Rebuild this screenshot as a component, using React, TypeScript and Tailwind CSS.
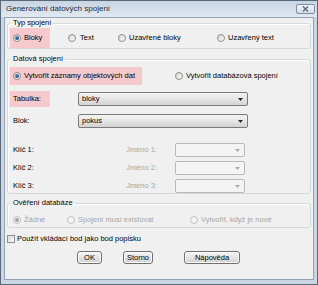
import type { ReactNode } from "react";

function Radio({ checked = false, disabled = false }: { checked?: boolean; disabled?: boolean }) {
  return (
    <span
      className={`flex h-[8px] w-[8px] shrink-0 items-center justify-center rounded-full border ${
        disabled ? "border-[#c2c2c2] bg-[#f3f3f3]" : "border-[#8e8f8f] bg-linear-to-br from-[#d4d4d4] to-[#fdfdfd]"
      }`}
    >
      {checked && (
        <span
          className={`h-[4px] w-[4px] rounded-full ${
            disabled ? "bg-[#a3a3a3]" : "bg-linear-to-br from-[#6a9ad2] to-[#123a6e]"
          }`}
        />
      )}
    </span>
  );
}

function Combo({ value, className, disabled = false }: { value?: string; className: string; disabled?: boolean }) {
  return (
    <div
      className={`flex h-[14px] items-center justify-between rounded-[2px] border pl-[3px] pr-[4px] ${className} ${
        disabled
          ? "border-[#b6babd] bg-[#f4f4f4]"
          : "border-[#7a7a7a] bg-linear-to-b from-[#f3f3f3] via-[#e6e6e6] to-[#d2d2d2]"
      }`}
    >
      <span>{value}</span>
      <svg width="5" height="3" viewBox="0 0 5 3">
        <path d="M0 0h5L2.5 3z" fill={disabled ? "#a8a8a8" : "#2a2a2a"} />
      </svg>
    </div>
  );
}

function Group({ title, children, className = "" }: { title: string; children: ReactNode; className?: string }) {
  return (
    <fieldset className={`rounded-[3px] border border-[#d3d9de] px-[2px] shadow-[inset_1px_1px_0_#ffffff] ${className}`}>
      <legend className="pl-[3px] pr-[2px] leading-[10px]">{title}</legend>
      {children}
    </fieldset>
  );
}

function Button({ label, className }: { label: string; className: string }) {
  return (
    <button
      className={`flex h-[13px] items-center justify-center rounded-[3px] border border-[#707070] bg-linear-to-b from-[#f6f6f6] via-[#e4e4e4] to-[#d0d0d0] shadow-[inset_0_0_0_1px_#fbfbfb] ${className}`}
    >
      {label}
    </button>
  );
}

export default function App() {
  return (
    <div className="flex h-[285px] w-[318px] flex-col whitespace-nowrap border border-[#5b6878] bg-[#cad6e3] font-['Liberation_Sans',Arial,sans-serif] text-[7.5px] leading-[10px] text-black">
      <div className="flex h-[16px] items-center justify-between bg-linear-to-b from-[#c7d4e2] to-[#e2e9f1] pl-[5px] pr-[2px]">
        <span className="text-[8px] text-[#1e2a38]">Generování datových spojení</span>
        <span className="flex h-[10px] w-[19px] items-center justify-center rounded-[2px] border border-[#7d8ea3] bg-linear-to-b from-[#f2f5f9] to-[#d5dee9]">
          <svg width="7" height="6" viewBox="0 0 7 6">
            <path d="M1 0.5l5 5M6 0.5l-5 5" stroke="#5d6a7a" strokeWidth="1.4" />
          </svg>
        </span>
      </div>

      <div className="mx-[3px] mb-[4px] flex flex-1 flex-col border border-[#93a3b5] bg-[#f0f0f0] px-[2px]">
        <Group title="Typ spojení">
          <div className="flex h-[20px] items-center">
            <div className="flex h-[20px] w-[40px] items-center gap-[3px] bg-[#f6c9cd] pl-[3px]">
              <Radio checked />
              <span>Bloky</span>
            </div>
            <div className="ml-[18px] flex w-[50px] items-center gap-[4px]">
              <Radio />
              <span>Text</span>
            </div>
            <div className="flex w-[99px] items-center gap-[3px]">
              <Radio />
              <span>Uzavřené bloky</span>
            </div>
            <div className="flex items-center gap-[3px]">
              <Radio />
              <span>Uzavřený text</span>
            </div>
          </div>
        </Group>

        <Group title="Datová spojení" className="mt-[5px]">
          <div className="mt-[3px] flex h-[18px] items-center">
            <div className="flex h-[18px] w-[132px] items-center gap-[3px] bg-[#f6c9cd] pl-[3px]">
              <Radio checked />
              <span>Vytvořit záznamy objektových dat</span>
            </div>
            <div className="ml-[33px] flex items-center gap-[3px]">
              <Radio />
              <span>Vytvořit databázová spojení</span>
            </div>
          </div>
          <div className="mt-[6px] flex h-[16px] items-center">
            <div className="flex h-[16px] w-[40px] items-center bg-[#f6c9cd] pl-[3px]">Tabulka:</div>
            <Combo value="bloky" className="ml-[28px] w-[170px]" />
          </div>
          <div className="mt-[6px] flex h-[16px] items-center">
            <div className="w-[68px] pl-[3px]">Blok:</div>
            <Combo value="pokus" className="w-[170px]" />
          </div>
          <div className="mt-[14px] flex flex-col gap-[4px]">
            {[1, 2, 3].map((n) => (
              <div key={n} className="flex h-[14px] items-center">
                <div className="w-[80px] pl-[3px]">Klíč {n}:</div>
                <div className="w-[67px] text-right text-[#a6a6a6]">Jméno {n}:</div>
                <Combo disabled className="ml-[18px] w-[70px]" />
              </div>
            ))}
          </div>
        </Group>

        <Group title="Ověření databáze" className="mt-[4px]">
          <div className="mt-[6px] mb-[1px] flex h-[12px] items-center pl-[3px] text-[#a6a6a6]">
            <div className="flex w-[54px] items-center gap-[3px]">
              <Radio checked disabled />
              <span>Žádné</span>
            </div>
            <div className="flex w-[123px] items-center gap-[3px]">
              <Radio disabled />
              <span>Spojení musí existovat</span>
            </div>
            <div className="flex items-center gap-[3px]">
              <Radio disabled />
              <span>Vytvořit, když je nové</span>
            </div>
          </div>
        </Group>

        <div className="mt-[6px] flex h-[9px] items-center gap-[2px]">
          <span className="h-[8px] w-[8px] border border-[#8e8f8f] bg-linear-to-br from-[#d8d8d8] to-[#fbfbfb]" />
          <span>Použít vkládací bod jako bod popisku</span>
        </div>

        <div className="mt-[8px] flex">
          <Button label="OK" className="ml-[70px] w-[25px] border-[#3c7fb1]" />
          <Button label="Storno" className="ml-[21px] w-[30px]" />
          <Button label="Nápověda" className="ml-[31px] w-[56px]" />
        </div>
      </div>
    </div>
  );
}
